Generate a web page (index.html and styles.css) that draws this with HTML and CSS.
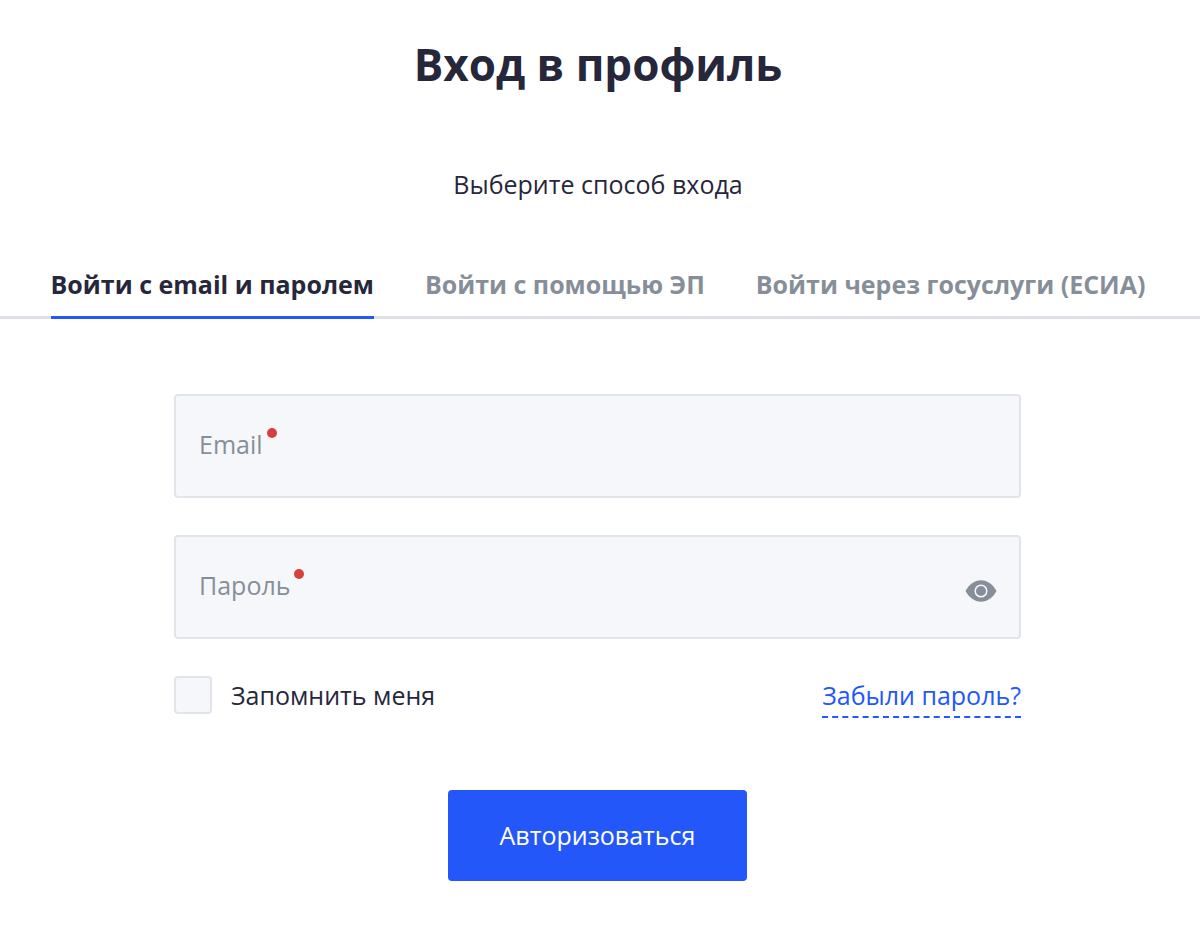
FILE: index.html
```html
<!DOCTYPE html>
<html lang="ru">
<head>
  <meta charset="UTF-8">
  <meta name="viewport" content="width=device-width, initial-scale=1.0">
  <title>Вход в профиль</title>
  <link rel="stylesheet" href="styles.css">
</head>
<body>
  <main class="login">
    <h1 class="login-title">Вход в профиль</h1>
    <p class="login-subtitle">Выберите способ входа</p>

    <nav class="tabs">
      <a href="#email" class="tab active">Войти с email и паролем</a>
      <a href="#ep" class="tab">Войти с помощью ЭП</a>
      <a href="#esia" class="tab">Войти через госуслуги (ЕСИА)</a>
    </nav>

    <form class="login-form">
      <div class="field">
        <input type="email" id="email" class="field-input" placeholder=" " required>
        <label for="email" class="field-label">Email</label>
      </div>

      <div class="field">
        <input type="password" id="password" class="field-input" placeholder=" " required>
        <label for="password" class="field-label">Пароль</label>
        <button type="button" class="toggle-password" id="togglePassword" aria-label="Показать пароль">
          <svg width="32" height="22" viewBox="0 0 32 22">
            <path d="M0.500 11C4 4.500 9.500 0.300 16 0.300S28 4.500 31.500 11C28 17.500 22.500 21.700 16 21.700S4 17.500 0.500 11Z" fill="#868f99"/>
            <circle cx="16" cy="11" r="5.800" fill="none" stroke="#f5f7fb" stroke-width="1.500"/>
          </svg>
        </button>
      </div>

      <div class="options">
        <label class="remember" for="remember">
          <input type="checkbox" id="remember" class="checkbox">
          Запомнить меня
        </label>
        <a href="#forgot" class="forgot">Забыли пароль?</a>
      </div>

      <button type="submit" class="submit">Авторизоваться</button>
    </form>
  </main>

  <script>
    // Show / hide password
    const password = document.getElementById('password');
    document.getElementById('togglePassword').addEventListener('click', () => {
      password.type = password.type === 'password' ? 'text' : 'password';
    });
  </script>
</body>
</html>
```
FILE: styles.css
```css
* {
  box-sizing: border-box;
}

body {
  margin: 0;
  background: #fff;
  color: #27273b;
  font-family: "Open Sans", "Noto Sans", sans-serif;
  font-size: 25px;
  line-height: 36px;
}

.login {
  padding: 34px 0 60px;
}

.login-title {
  margin: 0 4px 72px 0;
  font-size: 44px;
  line-height: 60px;
  text-align: center;
}

.login-subtitle {
  margin: 0 4px 64px 0;
  text-align: center;
}

.tabs {
  display: flex;
  justify-content: center;
  gap: 51px;
  padding-right: 4px;
  box-shadow: inset 0 -3px #dee2e6;
}

.tab {
  padding-bottom: 14px;
  border-bottom: 3px solid transparent;
  color: #868f99;
  font-weight: bold;
  text-decoration: none;
  white-space: nowrap;
}

.tab.active {
  border-color: #2457f9;
  color: #27273b;
}

.login-form {
  display: flex;
  flex-direction: column;
  gap: 37px;
  width: 71%;
  margin: 75px auto 0;
  padding-right: 5px;
}

.field {
  position: relative;
}

.field-input {
  display: block;
  width: 100%;
  height: 104px;
  padding: 24px 80px 24px 24px;
  border: 2px solid #e1e4e9;
  border-radius: 4px;
  background: #f5f7fb;
  color: inherit;
  font: inherit;
}

.field-label {
  position: absolute;
  top: 32px;
  left: 25px;
  color: #868f99;
  pointer-events: none;
}

.field-label::after {
  content: "";
  position: absolute;
  top: 2px;
  left: 100%;
  width: 10px;
  height: 10px;
  margin-left: 4px;
  border-radius: 50%;
  background: #d8403a;
}

.field-input:focus + .field-label,
.field-input:not(:placeholder-shown) + .field-label {
  top: 4px;
  font-size: 16px;
}

.toggle-password {
  position: absolute;
  top: 45px;
  right: 24px;
  padding: 0;
  border: 0;
  background: none;
  cursor: pointer;
}

.toggle-password svg {
  display: block;
}

.options {
  display: flex;
  align-items: flex-start;
  justify-content: space-between;
}

.remember {
  display: flex;
  align-items: center;
  gap: 19px;
}

.checkbox {
  width: 38px;
  height: 38px;
  margin: 0;
  border: 2px solid #e1e4e9;
  border-radius: 4px;
  background: #f5f7fb;
  appearance: none;
}

.checkbox:checked {
  background: #2457f9;
}

.forgot {
  padding: 1px 0 3px;
  border-bottom: 2px dashed #2457f9;
  color: #2457f9;
  text-decoration: none;
}

.submit {
  align-self: center;
  margin-top: 35px;
  padding: 27px 52px 28px;
  border: 0;
  border-radius: 4px;
  background: #2457f9;
  color: #fff;
  font: inherit;
  cursor: pointer;
}
```
